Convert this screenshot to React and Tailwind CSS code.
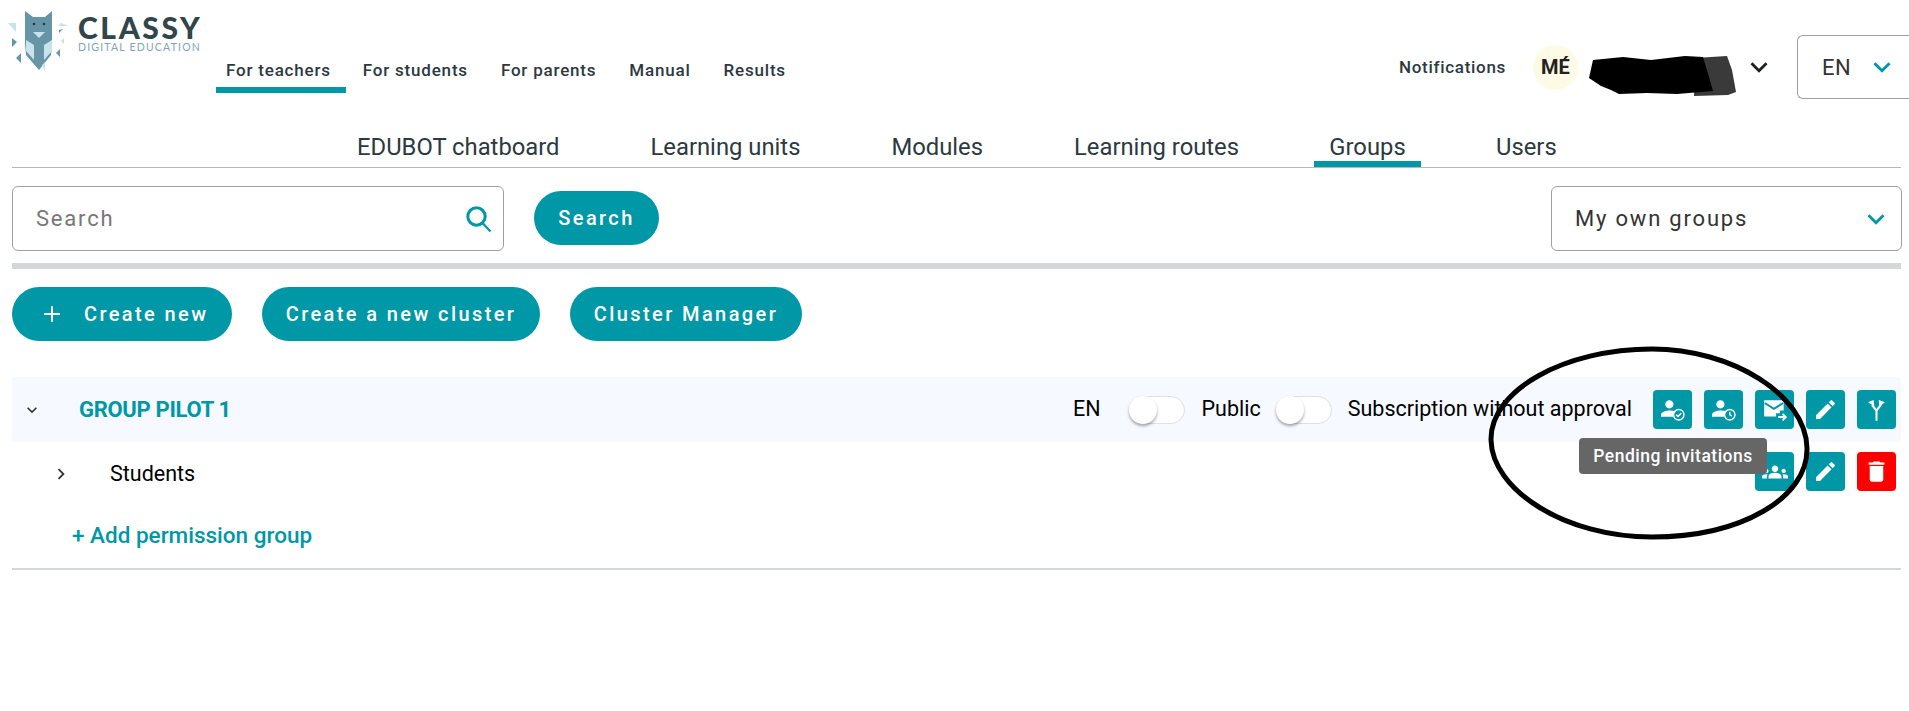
// App.jsx — CLASSY groups admin page with a tooltip and a hand-drawn annotation on top.
import { MdEdit, MdDelete, MdGroups, MdKeyboardArrowDown, MdKeyboardArrowRight } from "react-icons/md";
import { LuPlus } from "react-icons/lu";

const PERSON =
  "M9 11c2.21 0 4-1.79 4-4s-1.79-4-4-4-4 1.79-4 4 1.79 4 4 4zm0 2c-2.67 0-8 1.34-8 4v2h11.5c.3-3 1.5-4.6 3-5.2C13.6 13.3 10.6 13 9 13z";

function PersonCheck() {
  return (
    <svg viewBox="0 0 24 24" className="h-[25px] w-[25px]" fill="white">
      <path d={PERSON} />
      <circle cx="18" cy="17" r="5" fill="none" stroke="white" strokeWidth="1.4" />
      <path d="M15.6 17l1.7 1.7 3-3.2" fill="none" stroke="white" strokeWidth="1.4" />
    </svg>
  );
}

function PersonClock() {
  return (
    <svg viewBox="0 0 24 24" className="h-[25px] w-[25px]" fill="white">
      <path d={PERSON} />
      <circle cx="18" cy="17" r="5" fill="none" stroke="white" strokeWidth="1.4" />
      <path d="M18 14.2V17l2 1.3" fill="none" stroke="white" strokeWidth="1.3" />
    </svg>
  );
}

function MailForward() {
  return (
    <svg viewBox="0 0 24 24" className="h-[26px] w-[26px]">
      <path d="M2 3h18v9.5h-3.5V15H13v3H2z" fill="white" />
      <path d="M2.5 5.5L11 11l8.5-5.5" fill="none" stroke="#0097a7" strokeWidth="1.8" />
      <path d="M15 18.5h7M19 15.5l3 3-3 3" fill="none" stroke="white" strokeWidth="1.7" />
    </svg>
  );
}

function Fork() {
  return (
    <svg viewBox="0 0 24 24" className="h-[27px] w-[27px]">
      <path d="M12 22v-9L8 8M12 13l4.500-6" fill="none" stroke="white" strokeWidth="1.8" />
      <path d="M4.500 5.500L9.500 3.500l.5 5.500zM19.500 5.500L14 3.500l.5 5.500z" fill="white" />
    </svg>
  );
}

function Logo() {
  return (
    <div className="flex w-[216px] shrink-0 items-start pl-[8px] pt-[10px]">
      <svg viewBox="0 0 62 62" className="h-[62px] w-[62px] shrink-0">
        <path d="M17 1l8 6h12l7-6v33l-1 11-12 15-13-15-1-11z" fill="#6695a8" />
        <path d="M18 30l8 5v15l-8-9zM44 30l-8 5v15l8-9z" fill="#c9e3ea" />
        <path d="M25 22h12l-6 6z" fill="#c9e3ea" />
        <circle cx="26" cy="14" r="1.3" fill="#263a40" />
        <circle cx="36" cy="14" r="1.3" fill="#263a40" />
        <path d="M0 13h8v9zM53 13l8 3h-11zM56 28v6l-3-3zM34 55l3-3v10z" fill="#c9e3ea" />
        <path d="M4 28l5 4-5 5zM8 48l5-5v10zM48 43l4-4v8zM51 20l4-1-4 4z" fill="#6695a8" />
      </svg>
      <div className="ml-[8px] mt-[5px] font-[Lato,sans-serif]">
        <div className="text-[30px] font-black leading-[24px] tracking-[2.6px] text-[#32454b]">CLASSY</div>
        <div className="mt-[3px] whitespace-nowrap text-[10.5px] leading-[10px] tracking-[1.2px] text-[#7fa6b5]">DIGITAL EDUCATION</div>
      </div>
    </div>
  );
}

function Header() {
  return (
    <header className="flex h-[110px] items-start">
      <Logo />
      <nav className="mt-[54px] flex text-[17px] font-medium tracking-[0.8px] text-[#2c3a3f]">
        <a className="h-[39px] border-b-[6px] border-[#0097a7] pl-[10px] pr-[15px] pt-[6px] leading-[20px]">For teachers</a>
        <a className="ml-[17px] pt-[6px] leading-[20px]">For students</a>
        <a className="ml-[33px] pt-[6px] leading-[20px]">For parents</a>
        <a className="ml-[33px] pt-[6px] leading-[20px]">Manual</a>
        <a className="ml-[33px] pt-[6px] leading-[20px]">Results</a>
      </nav>
      <div className="ml-auto mt-[35px] flex h-[64px] items-center">
        <span className="mt-[2px] text-[17px] font-medium tracking-[0.7px] text-[#2c3a3f]">Notifications</span>
        <span className="ml-[27px] flex h-[45px] w-[45px] items-center justify-center rounded-full bg-[#fdfbe6] text-[20px] font-bold text-[#222]">MÉ</span>
        <svg viewBox="0 0 152 44" className="ml-[7px] mt-[17px] h-[44px] w-[152px] shrink-0">
          <path d="M110 4l32-2 5 14 4 22-8 3-34 1z" fill="#3a3a3a" />
          <path d="M4 24L8 6l30-3 28 3 34-4 18 1 6 20 4 14-36 3-30-1-28 1-8-4-10-4z" fill="#000" />
        </svg>
        <MdKeyboardArrowDown className="ml-[5px] h-[34px] w-[34px] text-[#1c2326]" />
        <div className="ml-[21px] flex h-[64px] w-[112px] items-center rounded-l-[6px] border border-r-0 border-[#a0a0a0] pl-[24px]">
          <span className="text-[22px] tracking-[0.5px] text-[#333]">EN</span>
          <MdKeyboardArrowDown className="ml-[14px] h-[34px] w-[34px] text-[#0097a7]" />
        </div>
      </div>
    </header>
  );
}

function Tabs() {
  return (
    <div className="ml-[12px] mr-[8px] flex h-[58px] items-start border-b border-[#b5b8b9] pl-[345px] text-[23.8px] text-[#2c3a3f]">
      <span className="mt-[24px] leading-[26px]">EDUBOT chatboard</span>
      <span className="ml-[91px] mt-[24px] leading-[26px]">Learning units</span>
      <span className="ml-[91px] mt-[24px] leading-[26px]">Modules</span>
      <span className="ml-[91px] mt-[24px] leading-[26px]">Learning routes</span>
      <span className="ml-[75px] mt-[24px] h-[33px] w-[107px] border-b-[6px] border-[#0097a7] text-center leading-[26px]">Groups</span>
      <span className="ml-[75px] mt-[24px] leading-[26px]">Users</span>
    </div>
  );
}

function SearchRow() {
  return (
    <div className="ml-[12px] mr-[7px] mt-[18px] flex h-[65px] items-center">
      <div className="flex h-[65px] w-[492px] items-center rounded-[6px] border border-[#a0a0a0] pl-[23px] pr-[11px]">
        <span className="text-[22px] tracking-[1.8px] text-[#777]">Search</span>
        <svg viewBox="0 0 26 26" className="ml-auto h-[26px] w-[26px]" fill="none" stroke="#0097a7">
          <circle cx="10.5" cy="10.5" r="8.7" strokeWidth="3" />
          <path d="M16.5 17l8 8.5" strokeWidth="2.2" />
        </svg>
      </div>
      <button className="mb-[2px] ml-[30px] h-[54px] w-[125px] rounded-[27px] bg-[#0097a7] text-[20px] font-medium tracking-[2.4px] text-white">Search</button>
      <div className="ml-auto flex h-[65px] w-[351px] items-center rounded-[6px] border border-[#a0a0a0] pl-[23px] pr-[8px]">
        <span className="text-[22px] tracking-[1.8px] text-[#333]">My own groups</span>
        <MdKeyboardArrowDown className="ml-auto h-[34px] w-[34px] text-[#0097a7]" />
      </div>
    </div>
  );
}

function ActionButton({ children, red }) {
  return (
    <span className={red ? "flex h-[39px] w-[39px] items-center justify-center rounded-[4px] bg-[#ff0000] text-white" : "flex h-[39px] w-[39px] items-center justify-center rounded-[4px] bg-[#0097a7] text-white"}>
      {children}
    </span>
  );
}

function Toggle() {
  return (
    <span className="relative block h-[28px] w-[56px] shrink-0 rounded-full border border-[#dcdfe3] bg-white">
      <span className="absolute -left-px -top-px h-[28px] w-[28px] rounded-full bg-white shadow-[0_2px_3px_rgba(0,0,0,0.35)]" />
    </span>
  );
}

function GroupRow() {
  return (
    <div className="ml-[12px] mr-[8px] mt-[36px] flex h-[65px] items-center rounded-[2px] bg-[#f6f9ff] pl-[10px] pr-[5px]">
      <MdKeyboardArrowDown className="h-[20px] w-[20px] text-[#333]" />
      <span className="ml-[37px] text-[22px] font-bold tracking-[-0.3px] text-[#0097a7]">GROUP PILOT 1</span>
      <span className="ml-auto text-[21.5px] text-black">EN</span>
      <span className="ml-[29px]"><Toggle /></span>
      <span className="ml-[16px] text-[21.5px] text-black">Public</span>
      <span className="ml-[15px]"><Toggle /></span>
      <span className="ml-[16px] text-[21.5px] text-black">Subscription without approval</span>
      <div className="ml-[21px] flex gap-[12px]">
        <ActionButton><PersonCheck /></ActionButton>
        <ActionButton><PersonClock /></ActionButton>
        <ActionButton><MailForward /></ActionButton>
        <ActionButton><MdEdit className="h-[25px] w-[25px]" /></ActionButton>
        <ActionButton><Fork /></ActionButton>
      </div>
    </div>
  );
}

function PermissionRow() {
  return (
    <div className="ml-[12px] mr-[8px] flex h-[64px] items-center pl-[38px] pr-[5px]">
      <MdKeyboardArrowRight className="h-[22px] w-[22px] text-[#333]" />
      <span className="ml-[38px] mt-[1px] text-[21.5px] text-black">Students</span>
      <div className="mb-[5px] ml-auto flex gap-[12px]">
        <ActionButton><MdGroups className="h-[26px] w-[26px]" /></ActionButton>
        <ActionButton><MdEdit className="h-[25px] w-[25px]" /></ActionButton>
        <ActionButton red><MdDelete className="h-[27px] w-[27px]" /></ActionButton>
      </div>
    </div>
  );
}

export default function App() {
  return (
    <div className="relative h-[711px] w-[1909px] overflow-hidden bg-white font-[Roboto,sans-serif]">
      <Header />
      <Tabs />
      <SearchRow />
      <div className="ml-[12px] mr-[8px] mt-[12px] h-[6px] bg-[#d3d7d7]" />
      <div className="ml-[12px] mt-[18px] flex gap-[30px] text-[20px] font-medium tracking-[2.4px] text-white">
        <button className="flex h-[54px] w-[220px] items-center rounded-[27px] bg-[#0097a7] pl-[28px]">
          <LuPlus className="h-[24px] w-[24px]" />
          <span className="ml-[20px]">Create new</span>
        </button>
        <button className="h-[54px] w-[278px] rounded-[27px] bg-[#0097a7]">Create a new cluster</button>
        <button className="h-[54px] w-[232px] rounded-[27px] bg-[#0097a7]">Cluster Manager</button>
      </div>
      <GroupRow />
      <PermissionRow />
      <div className="ml-[72px] flex h-[60px] items-center text-[22.5px] font-medium text-[#0097a7]">+ Add permission group</div>
      <div className="ml-[12px] mr-[8px] mt-[2px] h-[2px] bg-[#d3d7d7]" />

      {/* tooltip and the reviewer's marker circle sit on top of the page */}
      <div className="absolute left-[1579px] top-[438px] flex h-[36px] w-[188px] items-center justify-center rounded-[4px] bg-[#666] text-[17.5px] font-medium tracking-[0.5px] text-white">
        Pending invitations
      </div>
      <svg className="pointer-events-none absolute left-[1480px] top-[340px] h-[210px] w-[340px]" viewBox="0 0 340 210">
        <path d="M172 9C252 9 326 55 327 108c1 50-66 89-155 89C85 197 12 150 11 100 10 50 85 9 172 9z" fill="none" stroke="#000" strokeWidth="5" />
      </svg>
    </div>
  );
}
